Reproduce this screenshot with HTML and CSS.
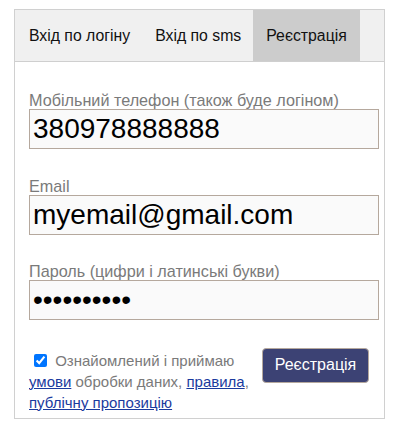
FILE: index.html
```html
<!DOCTYPE html>
<html lang="uk">
<head>
<meta charset="utf-8">
<link rel="stylesheet" href="styles.css">
</head>
<body>
<div class="panel">
  <div class="tabs">
    <div class="tab first">Вхід по логіну</div>
    <div class="tab">Вхід по sms</div>
    <div class="tab active">Реєстрація</div>
  </div>
  <form class="form">
    <div class="field">
      <label class="label">Мобільний телефон (також буде логіном)</label>
      <input class="input" type="text" value="380978888888">
    </div>
    <div class="field">
      <label class="label">Email</label>
      <input class="input" type="text" value="myemail@gmail.com">
    </div>
    <div class="field">
      <label class="label">Пароль (цифри і латинські букви)</label>
      <input class="input" type="password" value="1234567890">
    </div>
    <div class="bottom">
      <div class="agree"><input class="check" type="checkbox" checked> Ознайомлений і приймаю <a href="#">умови</a> обробки даних, <a href="#">правила</a>, <a href="#">публічну пропозицію</a></div>
      <button class="btn" type="button">Реєстрація</button>
    </div>
  </form>
</div>
</body>
</html>
```
FILE: styles.css
```css
html, body {
  margin: 0;
  padding: 0;
  background: #fff;
}
body {
  font-family: "Liberation Sans", Arial, sans-serif;
  font-size: 16px;
}
.panel {
  box-sizing: border-box;
  width: 371px;
  height: 410px;
  margin: 9px 0 0 14px;
  border: 1px solid #d0d0d0;
}
.tabs {
  display: flex;
  background: #f0f0f0;
  border-bottom: 1px solid #cfcfcf;
  height: 51px;
}
.tab {
  padding: 0 12px 0 13px;
  line-height: 51px;
  font-size: 15.8px;
  color: #111;
}
.tab.first {
  padding-left: 14px;
}
.tab.active {
  background: #cccccc;
  padding: 0 13px;
}
.form {
  padding: 29px 0 0 14px;
  margin: 0;
}
.field {
  margin-bottom: 27.5px;
}
.label {
  display: block;
  color: #7a7a7a;
  line-height: 18px;
  font-size: 16.2px;
}
.input {
  box-sizing: border-box;
  display: block;
  width: 350px;
  height: 40px;
  margin: 0;
  padding: 0 3px;
  border: 1px solid #b5a89d;
  background: #fafafa;
  font-family: "Liberation Sans", Arial, sans-serif;
  font-size: 28px;
  color: #000;
  outline: none;
}
.bottom {
  display: flex;
  align-items: flex-start;
}
.agree {
  width: 228px;
  line-height: 21px;
  font-size: 15px;
  color: #7a7a7a;
  padding-top: 2px;
}
.check {
  margin: 0 4px 0 5px;
  width: 13px;
  height: 13px;
  vertical-align: -1px;
}
.agree a {
  color: #1a3a9e;
  text-decoration: underline;
}
.btn {
  margin-left: 5px;
  width: 107px;
  height: 35px;
  background: #3c4274;
  color: #fff;
  border: 1px solid #b5a89d;
  border-radius: 4px;
  font-family: "Liberation Sans", Arial, sans-serif;
  font-size: 16px;
  padding: 0;
}
```
